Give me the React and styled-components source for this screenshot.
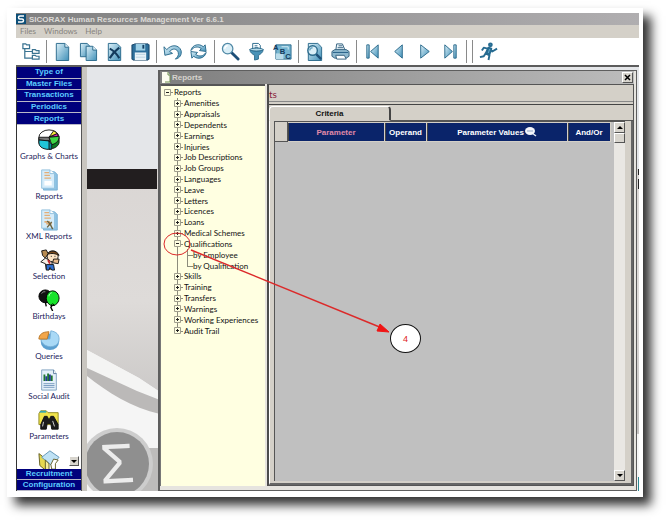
import React, { useState } from "react";
import styled, { createGlobalStyle, css } from "styled-components";

const menus = ["Files", "Windows", "Help"];

const topGroups = ["Type of", "Master Files", "Transactions", "Periodics", "Reports"];
const bottomGroups = ["Recruitment", "Configuration"];

const tree = [
  { name: "Reports", depth: 0, open: true },
  { name: "Amenities", depth: 1 },
  { name: "Appraisals", depth: 1 },
  { name: "Dependents", depth: 1 },
  { name: "Earnings", depth: 1 },
  { name: "Injuries", depth: 1 },
  { name: "Job Descriptions", depth: 1 },
  { name: "Job Groups", depth: 1 },
  { name: "Languages", depth: 1 },
  { name: "Leave", depth: 1 },
  { name: "Letters", depth: 1 },
  { name: "Licences", depth: 1 },
  { name: "Loans", depth: 1 },
  { name: "Medical Schemes", depth: 1 },
  { name: "Qualifications", depth: 1, open: true },
  { name: "by Employee", depth: 2 },
  { name: "by Qualification", depth: 2, last: true },
  { name: "Skills", depth: 1 },
  { name: "Training", depth: 1 },
  { name: "Transfers", depth: 1 },
  { name: "Warnings", depth: 1 },
  { name: "Working Experiences", depth: 1 },
  { name: "Audit Trail", depth: 1, last: true },
];

/* toolbar drawings, all on a 20x20 grid */
const toolIcons = {
  Tree: (
    <g fill="#fff" stroke="#3a7391" strokeWidth="1.3">
      <path d="M4 6v11h8M4 10h8" fill="none" />
      <path d="M2 2h3l1 1h3v4H2zM12 8h3l1 1h3v3h-7zM12 14h3l1 1h3v3h-7z" />
    </g>
  ),
  New: (
    <g stroke="#2b6a8c">
      <path d="M3.500 1.500h9l4 4v14h-13z" fill="url(#paper)" />
      <path d="M12.500 1.500v4h4" fill="#e8f4fa" />
    </g>
  ),
  Copy: (
    <g stroke="#2b6a8c">
      <path d="M1.500 1.500h7l3 3v11h-10z" fill="url(#paper)" />
      <path d="M7.500 4.500h7l4 4v11h-11z" fill="url(#paper)" />
      <path d="M14.500 4.500v4h4" fill="#e8f4fa" />
    </g>
  ),
  Delete: (
    <g stroke="#2b6a8c">
      <path d="M3.500 1.500h9l4 4v14h-13z" fill="url(#paper)" />
      <path d="M5 7c4 2 7 5 10 10M15 6c-4 3-7 6-10 11" fill="none" stroke="#123a5c" strokeWidth="2.200" />
    </g>
  ),
  Save: (
    <g>
      <path d="M2 3l2-1h14l1 1v15l-1 1H2l-1-1V3z" fill="#2d6f9b" stroke="#123f63" />
      <path d="M5 2h10v7H5z" fill="#9fd0e6" />
      <path d="M4 11h12v8H4z" fill="#e9f3f8" />
      <path d="M12 3h2v4h-2z" fill="#123f63" />
      <path d="M5 13h10M5 16h10" stroke="#b9d3e0" />
    </g>
  ),
  Undo: (
    <path
      d="M1 5l1 9 8-2-3-2c3-4 8-3 9 1 1 3-1 5-3 7 5-1 7-5 6-9C17 3 9 2 4 8z"
      fill="url(#paper)"
      stroke="#2b6a8c"
    />
  ),
  Refresh: (
    <g fill="url(#paper)" stroke="#2b6a8c">
      <path d="M2 9C3 3 11 1 15 5l2-2 1 7-7-1 2-2C9 4 5 5 2 9z" />
      <path d="M18 11c-1 6-9 8-13 4l-2 2-1-7 7 1-2 2c4 3 8 2 11-2z" />
    </g>
  ),
  Find: (
    <g>
      <path d="M11 11l7 7" stroke="#1d4f78" strokeWidth="3" strokeLinecap="round" />
      <circle cx="7" cy="7" r="5.500" fill="#d9eef7" stroke="#5089a6" strokeWidth="1.300" />
      <path d="M4 7c0-2 1-3 3-3" fill="none" stroke="#fff" strokeWidth="1.500" />
    </g>
  ),
  Filter: (
    <g stroke="#2b6a8c">
      <path d="M6 1.500h6l2 2V8H6z" fill="#fff" />
      <path d="M8 4h3M8 6h4" />
      <path d="M3 8c3 2 11 2 14 0 0 3-3 5-5 6v4l-4 1v-5c-2-1-5-3-5-6z" fill="#4a93b8" />
      <ellipse cx="10" cy="8" rx="7" ry="1.500" fill="#b8dcea" />
    </g>
  ),
  Sort: (
    <g>
      <path d="M3 3h16v15H3z" fill="#75b4d0" stroke="#2b6a8c" />
      <path d="M3 12h8v6H3z" fill="#b9dcea" />
      <path d="M9 5h7v3" fill="none" stroke="#d7eef7" />
      <text x="0" y="8" fontSize="8">A</text>
      <text x="7" y="13" fontSize="8">B</text>
      <text x="13" y="18" fontSize="8">C</text>
    </g>
  ),
  Preview: (
    <g>
      <path d="M3.500 1.500h10l4 4v14h-14z" fill="url(#paper)" stroke="#2b6a8c" />
      <path d="M11 12l6 6" stroke="#1d4f78" strokeWidth="2.500" />
      <circle cx="8" cy="9" r="5" fill="#d9eef7" stroke="#2b6a8c" strokeWidth="1.500" />
      <path d="M5 9c0-2 1-3 3-3" fill="none" stroke="#6ea9c5" strokeWidth="1.500" />
    </g>
  ),
  Print: (
    <g stroke="#35627f">
      <path d="M5 9l1-7h6l3 7z" fill="#eef7fb" />
      <path d="M8 4h4M7 6h6" />
      <path d="M1 10l3-2h12l3 2v5l-3 2H4l-3-2z" fill="#8fb9cf" />
      <path d="M5 14h9l2 4H6z" fill="#fff" />
      <path d="M2 11h16" stroke="#225d84" />
    </g>
  ),
  First: (
    <g fill="url(#paper)" stroke="#2b6a8c">
      <path d="M4 3h2.500v14H4z" />
      <path d="M16 3v14L8 10z" />
    </g>
  ),
  Previous: <path d="M14 3v14L6 10z" fill="url(#paper)" stroke="#2b6a8c" />,
  Next: <path d="M6 3v14l9-7z" fill="url(#paper)" stroke="#2b6a8c" />,
  Last: (
    <g fill="url(#paper)" stroke="#2b6a8c">
      <path d="M13.500 3H16v14h-2.500z" />
      <path d="M4 3v14l8-7z" />
    </g>
  ),
  Exit: (
    <g fill="none" stroke="#266b91" strokeWidth="2" strokeLinejoin="round">
      <path d="M10 6l-3 6 4 2-1 5M7 12l-2 3-4 1M9 7L5 6 3 9M11 7l3 3 5-3" />
      <path d="M10 6l-2 6 3 1 2-6z" fill="#5fa6c8" />
      <circle cx="12" cy="3" r="1.500" fill="#5fa6c8" />
    </g>
  ),
};

const toolbar = [
  "Tree", "|", "New", "Copy", "Delete", "Save", "|", "Undo", "Refresh", "|",
  "Find", "Filter", "Sort", "|", "Preview", "Print", "|",
  "First", "Previous", "Next", "Last", "|", "|", "Exit",
];

/* sidebar drawings, all on a 24x24 grid */
const page = (
  <g>
    <path d="M6 3h12l3 3v17H6z" fill="#8fc4e4" stroke="#76aed2" />
    <path d="M4 1h9l5 4v16H4z" fill="#d5ecfa" stroke="#8fbfdd" />
    <path d="M13 1v4h5" fill="#fff" stroke="#8fbfdd" />
    <path d="M7 4h5M7 7h6M7 10h7" stroke="#e2ad76" strokeWidth="1.500" />
  </g>
);

const shortcuts = [
  {
    name: "Graphs & Charts",
    icon: (
      <g stroke="#111">
        <path d="M1 10v5c2 9 20 9 22 0v-5z" fill="#0b7a21" />
        <ellipse cx="12" cy="9" rx="11" ry="8" fill="#fff" />
        <path d="M12 9l5-7c2 1 3 2 4 3z" fill="#f3e83a" />
        <path d="M12 9l9-4 1 3z" fill="#e02ac0" />
        <path d="M12 9l11-1c0 5-3 8-8 9z" fill="#3bd545" />
        <path d="M1 9h11l1 4-12-1z" fill="#777" />
        <path d="M1 12l11 1 2 4v5c-7 1-13-2-13-7z" fill="#20c5d8" />
        <path d="M12 13l3 4v5h-3z" fill="#0a8a9c" />
      </g>
    ),
  },
  { name: "Reports", icon: <g>{page}<path d="M7 13h8v5H7z" fill="#fff" /></g> },
  {
    name: "XML Reports",
    icon: (
      <g>
        {page}
        <path d="M7 14h3M12 13v5M9 16h6" stroke="#e2ad76" strokeWidth="2" />
        <path d="M10 13l3 3 3 6M15 14l-5 6" stroke="#6b6340" strokeWidth="1.500" fill="none" />
      </g>
    ),
  },
  {
    name: "Selection",
    icon: (
      <g stroke="#111">
        <path d="M3 14l5-4 7 3 1 9H9l-1-6z" fill="#f7f0e7" />
        <path d="M9 17h8l1 6h-3l-2-3-1 3H9z" fill="#2d6fd0" />
        <ellipse cx="16" cy="8" rx="6" ry="6" fill="#fbe3c4" />
        <path d="M10 6c2-5 11-5 13 1-4-2-8-3-13-1z" fill="#7a4a1c" />
        <path d="M4 2l5-1 2 4-3 5-3-3z" fill="#b78b52" />
        <path d="M17 11h6l-1 5-6-1z" fill="#e9b98b" />
        <path d="M11 12l2 4" stroke="#c2242b" strokeWidth="2" />
        <path d="M14 8h1M18 8h1" />
      </g>
    ),
  },
  {
    name: "Birthdays",
    icon: (
      <g stroke="#000">
        <path d="M8 14l1 5M16 17l-2 3 2 4" fill="none" strokeWidth="1.500" />
        <ellipse cx="8" cy="8" rx="7" ry="7" fill="#111" />
        <path d="M4 5c1-2 2-2 4-2" stroke="#999" fill="none" />
        <ellipse cx="16" cy="10" rx="7" ry="8" fill="#18e32b" />
        <path d="M12 8c0-2 1-3 3-4" stroke="#c9ffd0" fill="none" />
        <path d="M14 18h4l-2-2z" fill="#18e32b" />
      </g>
    ),
  },
  {
    name: "Queries",
    icon: (
      <g>
        <ellipse cx="13" cy="14" rx="10" ry="9" fill="#5b9fd0" />
        <path d="M3 11c2 11 20 11 20 0 0-5-3-8-9-9l-1 9z" fill="#a9d9f6" stroke="#77b0d8" />
        <path d="M1 11c0-5 4-8 11-8l-2 8z" fill="#f2a64a" stroke="#b87526" />
      </g>
    ),
  },
  {
    name: "Social Audit",
    icon: (
      <g>
        <path d="M4 1h13l3 4v18H4z" fill="#e4f0f9" stroke="#7c9fbe" />
        <path d="M17 1v4h3" fill="#fff" stroke="#57789a" />
        <path d="M7 6v7M11 5v8M15 7v6" stroke="#1d7730" strokeWidth="2" />
        <path d="M9 8v5M13 6v7" stroke="#243b92" strokeWidth="2" />
        <path d="M6 16h12M6 18h12M6 20h12" stroke="#7397bd" />
      </g>
    ),
  },
  {
    name: "Parameters",
    icon: (
      <g stroke="#111">
        <path d="M1 5l2-3h6l2 2h11v13H1z" fill="#f0e34a" stroke="#8d861e" />
        <path d="M2 3h7" stroke="#37a6b0" strokeWidth="2" />
        <path d="M7 8h3l2 4 2-4h3l5 9v5h-7l-1-6h-4l-1 6H3v-5z" fill="#1b1b1b" />
        <path d="M6 14l-1 5M16 13l2 6" stroke="#ddd" />
      </g>
    ),
  },
  {
    icon: (
      <g stroke="#5e5a20">
        <path d="M1 5l9 7-2 11-6-5z" fill="#e6d94f" />
        <path d="M4 9l9-7 10 7-8 9z" fill="#bfe2f5" stroke="#5d93b3" />
        <path d="M8 12l4 4v7l-4-1z" fill="#f6ef9b" />
        <path d="M14 17l3-6 5 1-3 4v6h-4z" fill="#fff" />
      </g>
    ),
  },
];

const columns = [
  { name: "Parameter", width: "97px", active: true },
  { name: "Operand", width: "42px" },
  { name: "Parameter Values", lookup: true },
  { name: "And/Or", width: "43px" },
];

const Wallpaper = () => (
  <Backdrop viewBox="0 0 553 424" preserveAspectRatio="xMinYMin slice" aria-hidden="true">
    <defs>
      <linearGradient id="wall" x1="0" y1="0" x2="0" y2="1">
        <stop offset="0" stopColor="#dad6d4" />
        <stop offset="0.500" stopColor="#dedbd9" />
        <stop offset="1" stopColor="#c4c2c1" />
      </linearGradient>
    </defs>
    <path d="M0 0h553v102H0z" fill="#e4e6e9" />
    <path d="M0 102h553v322H0z" fill="#f5f5f5" />
    <path d="M0 102h553v265L73 325 52 311 0 283z" fill="url(#wall)" />
    <path d="M0 283l52 28 21 14v8l-23-9L0 301z" fill="#f4f4f3" />
    <path d="M0 301l50 23 23 9v14C45 341 20 325 0 309z" fill="#bbb9b8" />
    <path d="M0 102h70v20H0z" fill="#221e1f" />
    <path d="M45 381h28v43H45z" fill="#bdbcbb" />
    <circle cx="30" cy="397" r="36" fill="#cdcdcd" />
    <circle cx="30" cy="397" r="32" fill="#8f8f8f" />
    <text x="13" y="416" transform="rotate(-3 30 400)" fontSize="56" fill="#ececec">
      Σ
    </text>
    <path d="M551 102h2v6h-2zM551 112h2v10h-2z" fill="#222" />
    <path d="M551 410h2v14h-2z" fill="#2c8a94" />
  </Backdrop>
);

const ToolIcon = ({ name }) => (
  <svg width="19" height="19" viewBox="0 0 20 20" fontWeight="700" fill="#123a5c">
    <defs>
      <linearGradient id="paper" x1="0" y1="0" x2="1" y2="1">
        <stop offset="0" stopColor="#dcf0f8" />
        <stop offset="1" stopColor="#4090b8" />
      </linearGradient>
    </defs>
    {toolIcons[name]}
  </svg>
);

const Annotation = () => (
  <>
    <Marks viewBox="0 0 260 120" width="260" height="120" aria-hidden="true">
      <g fill="none" stroke="#dc2a2a">
        <ellipse cx="17" cy="17" rx="13" ry="11" />
        <path d="M31 23l191 78" strokeWidth="1.500" />
      </g>
      <path d="M220 97l9 8-12-1z" fill="#f01414" stroke="#f01414" />
    </Marks>
    <Bubble>4</Bubble>
  </>
);

const App = () => {
  const [selected, setSelected] = useState("Reports");

  return (
    <Screen>
      <GlobalStyle />
      <Frame>
        <TitleBar>
          <Logo viewBox="0 0 10 10">
            <path d="M0 0h10v10H0z" fill="#0d4f78" />
            <path d="M8 2H4C2 2 2 5 4 5h2c2 0 2 3 0 3H2" fill="none" stroke="#fff" strokeWidth="1.500" />
          </Logo>
          <h1>SICORAX Human Resources Management Ver 6.6.1</h1>
        </TitleBar>
        <MenuBar>
          {menus.map((menu) => (
            <MenuButton key={menu}>{menu}</MenuButton>
          ))}
        </MenuBar>
        <Toolbar>
          {toolbar.map((name, i) =>
            name === "|" ? (
              <Separator key={i} />
            ) : (
              <ToolButton key={i} aria-label={name}>
                <ToolIcon name={name} />
              </ToolButton>
            )
          )}
        </Toolbar>
        <Workspace>
          <Sidebar>
            <Groups $height="58px">
              {topGroups.map((group) => (
                <GroupButton key={group}>{group}</GroupButton>
              ))}
            </Groups>
            <Shortcuts>
              {shortcuts.map((item, i) => (
                <Shortcut key={i}>
                  <svg width="22" height="22" viewBox="0 0 24 24">
                    {item.icon}
                  </svg>
                  {item.name && <span>{item.name}</span>}
                </Shortcut>
              ))}
              <MoreButton aria-label="Scroll down">
                <Arrow />
              </MoreButton>
            </Shortcuts>
            <Groups $height="22px">
              {bottomGroups.map((group) => (
                <GroupButton key={group}>{group}</GroupButton>
              ))}
            </Groups>
          </Sidebar>
          <Desktop>
            <Wallpaper />
            <Window>
              <WindowTitle>
                <svg width="10" height="11" viewBox="0 0 10 11">
                  <path d="M1 0h6l2 3v8H1z" fill="#fdfdf0" />
                  <path d="M7 0v3h2v7H4" fill="none" stroke="#6f8f52" />
                </svg>
                <h2>Reports</h2>
                <CloseButton aria-label="Close">
                  <svg width="7" height="7" viewBox="0 0 7 7">
                    <path d="M1 1l5 5M6 1L1 6" stroke="#000" strokeWidth="1.500" />
                  </svg>
                </CloseButton>
              </WindowTitle>
              <WindowBody>
                <TreePane>
                  <TreeList>
                    {tree.map((node) => (
                      <TreeRow key={node.name} $depth={node.depth} $last={node.last}>
                        {node.depth < 2 && (
                          <Expander width="7" height="7" viewBox="0 0 7 7">
                            <path d="M.5.5h6v6h-6z" fill="#ffffe1" stroke="#a09f8e" />
                            <path d={node.open ? "M2 3.500h3" : "M2 3.500h3M3.500 2v3"} stroke="#222" />
                          </Expander>
                        )}
                        <NodeButton onClick={() => setSelected(node.name)} aria-pressed={selected === node.name}>
                          {node.name}
                        </NodeButton>
                      </TreeRow>
                    ))}
                  </TreeList>
                </TreePane>
                <Content>
                  <Heading>ts</Heading>
                  <TabRow>
                    <Tab>Criteria</Tab>
                  </TabRow>
                  <TabPage>
                    <Grid>
                      <GridArea>
                        <Table>
                          <thead>
                            <tr>
                              <RowHead />
                              {columns.map((col) => (
                                <HeadCell key={col.name} $width={col.width} $active={col.active}>
                                  {col.name}
                                  {col.lookup && (
                                    <Lookup width="12" height="10" viewBox="0 0 12 10">
                                      <path d="M7 6l4 3" stroke="#dfe6f2" strokeWidth="1.500" />
                                      <ellipse cx="5" cy="4" rx="5" ry="4" fill="#f2f5fa" />
                                      <path d="M2 4h6" stroke="#8fa3c4" />
                                    </Lookup>
                                  )}
                                </HeadCell>
                              ))}
                            </tr>
                          </thead>
                        </Table>
                      </GridArea>
                      <ScrollBar>
                        <ScrollButton aria-label="Scroll up">
                          <Arrow $up />
                        </ScrollButton>
                        <Thumb />
                        <ScrollButton aria-label="Scroll down">
                          <Arrow />
                        </ScrollButton>
                      </ScrollBar>
                    </Grid>
                  </TabPage>
                </Content>
              </WindowBody>
              <Annotation />
            </Window>
          </Desktop>
        </Workspace>
      </Frame>
    </Screen>
  );
};

export default App;

const GlobalStyle = createGlobalStyle`
  * {
    box-sizing: border-box;
  }

  body {
    margin: 0;
    background: #fff;
    color: #111;
    font-family: Lato, "Liberation Sans", Arial, sans-serif;
    font-size: 8px;
    line-height: 11px;
  }

  button {
    margin: 0;
    padding: 0;
    border: 0;
    background: none;
    color: inherit;
    font: inherit;
  }

  h1, h2, ul {
    margin: 0;
    padding: 0;
  }

  svg {
    display: block;
    flex: none;
    font-family: "Liberation Sans", Arial, sans-serif;
  }
`;

const boldText = css`
  font-family: "Liberation Sans", Arial, sans-serif;
  font-size: 8px;
  font-weight: 700;
`;

const raised = css`
  background: #d8d5ce;
  border: 1px solid;
  border-color: #fff #555 #555 #fff;
`;

const Screen = styled.div`
  display: flex;
  height: 100vh;
  padding: 8px 23px 23px 7px;
`;

const Frame = styled.main`
  display: flex;
  flex: 1;
  min-width: 0;
  flex-direction: column;
  padding: 5px 4px 6px 9px;
  background: #fff;
  box-shadow: 8px 8px 10px #333;
`;

const TitleBar = styled.header`
  display: flex;
  align-items: center;
  gap: 3px;
  height: 12px;
  background: linear-gradient(90deg, #808080, #b0aeb0);

  h1 {
    ${boldText}
    color: #dcdad6;
  }
`;

const Logo = styled.svg`
  width: 10px;
  height: 10px;
`;

const MenuBar = styled.nav`
  display: flex;
  align-items: center;
  gap: 8px;
  height: 13px;
  padding-left: 4px;
  background: #d4d0c8;
`;

const MenuButton = styled.button`
  color: #86837d;
`;

const Toolbar = styled.div`
  display: flex;
  align-items: center;
  height: 29px;
  padding-left: 1px;
  border-bottom: 2px solid #5c5c5c;
`;

const ToolButton = styled.button`
  display: flex;
  justify-content: center;
  width: 26px;
`;

const Separator = styled.i`
  width: 1px;
  height: 23px;
  margin: 0 2px 0 3px;
  background: #8a8a8a;
`;

const Workspace = styled.div`
  display: flex;
  flex: 1;
  min-height: 0;
`;

const Sidebar = styled.aside`
  display: flex;
  flex: none;
  flex-direction: column;
  width: 66px;
  border-left: 1px solid #333;
  border-right: 1px solid #555;
`;

const Groups = styled.div`
  display: grid;
  grid-auto-rows: 1fr;
  flex: none;
  height: ${({ $height }) => $height};
`;

const GroupButton = styled.button`
  ${boldText}
  min-height: 0;
  border-bottom: 1px solid #b9b9c8;
  background: #00007c;
  color: #5ccbff;
  line-height: 10px;
`;

const Shortcuts = styled.div`
  position: relative;
  flex: 1;
  min-height: 0;
  padding-top: 4px;
  overflow: hidden;
`;

const Shortcut = styled.button`
  display: flex;
  flex-direction: column;
  align-items: center;
  width: 100%;
  height: 40px;
  color: #1c1c5c;
  white-space: nowrap;
`;

const MoreButton = styled.button`
  ${raised}
  position: absolute;
  right: 2px;
  bottom: 3px;
  display: flex;
  align-items: center;
  justify-content: center;
  width: 10px;
  height: 10px;
`;

const Arrow = styled.i`
  width: 0;
  border: 3px solid transparent;
  border-top: ${({ $up }) => ($up ? "0" : "3px solid #000")};
  border-bottom: ${({ $up }) => ($up ? "3px solid #000" : "0")};
`;

const Desktop = styled.section`
  position: relative;
  display: flex;
  flex: 1;
  min-width: 0;
  padding: 3px 2px 0 71px;
  border-left: 5px solid #c9c6c0;
  box-shadow: inset 1px 0 0 #555;
`;

const Backdrop = styled.svg`
  position: absolute;
  inset: 0;
  width: 100%;
  height: 100%;
`;

const Window = styled.div`
  position: relative;
  display: flex;
  flex: 1;
  min-width: 0;
  flex-direction: column;
  padding-right: 2px;
  border: solid #5e5e5e;
  border-width: 1px 1px 1px 2px;
  background: #e6e4df;
`;

const WindowTitle = styled.div`
  display: flex;
  flex: none;
  align-items: center;
  gap: 1px;
  height: 13px;
  padding: 0 1px;
  background: linear-gradient(90deg, #7e7e7e, #bcbcbc);

  h2 {
    ${boldText}
    flex: 1;
    color: #d6d3cd;
  }
`;

const CloseButton = styled.button`
  ${raised}
  display: flex;
  align-items: center;
  justify-content: center;
  width: 11px;
  height: 11px;
`;

const WindowBody = styled.div`
  display: flex;
  flex: 1;
  min-height: 0;
  padding-bottom: 4px;
`;

const TreePane = styled.div`
  flex: none;
  width: 105px;
  padding-top: 1px;
  border-top: 2px solid #555;
  border-left: 1px solid #777;
  background: #ffffe1;
`;

const TreeList = styled.ul`
  display: grid;
  grid-auto-rows: 1fr;
  height: 249px;
  list-style: none;
`;

const TreeRow = styled.li`
  position: relative;
  display: flex;
  align-items: center;
  min-height: 0;
  padding-left: ${({ $depth }) => [3, 13, 26][$depth]}px;
  line-height: 10px;

  ${({ $depth, $last }) =>
    $depth === 2 &&
    !$last &&
    css`
      background: linear-gradient(#8c8c7c, #8c8c7c) 26px 0 / 1px 100% no-repeat;
    `}

  /* branch line on the left and the short arm to the label */
  &::before {
    content: "";
    position: absolute;
    top: 0;
    left: 16px;
    height: ${({ $depth, $last }) => ($depth === 1 && $last ? "50%" : "100%")};
    border-left: ${({ $depth }) => ($depth ? "1px solid #8c8c7c" : "0")};
  }

  &::after {
    content: "";
    position: absolute;
    top: ${({ $depth }) => ($depth === 2 ? "0" : "50%")};
    left: ${({ $depth }) => [10, 20, 26][$depth]}px;
    width: ${({ $depth }) => ($depth === 2 ? 5 : 2)}px;
    height: 50%;
    border: solid #8c8c7c;
    border-width: ${({ $depth }) => ($depth === 2 ? "0 0 1px 1px" : "1px 0 0 0")};
  }
`;

const Expander = styled.svg`
  position: relative;
`;

const NodeButton = styled.button`
  flex: 1;
  padding-left: 3px;
  text-align: left;
  white-space: nowrap;

  &:first-child {
    padding-left: 6px;
  }
`;

const Content = styled.div`
  display: flex;
  flex: 1;
  min-width: 0;
  flex-direction: column;
  margin-left: 2px;
  border-left: 2px solid #4c4c4c;
  border-right: 1px solid #555;
  border-bottom: 1px solid #555;
  background: #d4d0c8;
`;

const Heading = styled.div`
  height: 18px;
  border-top: 1px solid #555;
  border-bottom: 1px solid #888;
  color: #8a1c3c;
  font-size: 10px;
  line-height: 18px;
`;

const TabRow = styled.div`
  display: flex;
  height: 17px;
  margin-top: 2px;
  border-top: 1px solid #444;
  box-shadow: inset 0 -1px 0 #555;
`;

const Tab = styled.button`
  ${boldText}
  width: 122px;
  margin-top: 1px;
  border: 1px solid;
  border-color: #fff #444 #d4d0c8 #fff;
  border-right-width: 2px;
  border-radius: 4px 4px 0 0;
  background: #d4d0c8;
`;

const TabPage = styled.div`
  display: flex;
  flex: 1;
  min-height: 0;
  padding: 0 6px 2px 4px;
  border-left: 1px solid #fff;
  border-right: 2px solid #666;
  border-bottom: 2px solid #666;
`;

const Grid = styled.div`
  display: flex;
  flex: 1;
  min-width: 0;
  border: solid #555;
  border-width: 1px 0 0 1px;
  background: #c0c0c0;
`;

const GridArea = styled.div`
  flex: 1;
  min-width: 0;
  padding-right: 3px;
`;

const Table = styled.table`
  width: 100%;
  border-spacing: 0;
  table-layout: fixed;
`;

const HeadCell = styled.th`
  ${boldText}
  width: ${({ $width }) => $width || "auto"};
  height: 20px;
  padding: 0;
  border: solid #d4d0c8;
  border-width: 1px 1px 1px 0;
  background: #0a246a;
  box-shadow: inset 1px 0 0 #444;
  color: ${({ $active }) => ($active ? "#e08aa8" : "#fff")};
  white-space: nowrap;
`;

const RowHead = styled.td`
  width: 13px;
  padding: 0;
  border-right: 1px solid #555;
  border-bottom: 1px solid #555;
  background: #d4d0c8;
`;

const Lookup = styled.svg`
  display: inline-block;
  margin-left: 1px;
  vertical-align: middle;
`;

const ScrollBar = styled.div`
  display: flex;
  flex-direction: column;
  width: 11px;
  background: #e9e7e3;
`;

const ScrollButton = styled.button`
  ${raised}
  display: flex;
  align-items: center;
  justify-content: center;
  width: 11px;
  height: 11px;
`;

const Thumb = styled.div`
  ${raised}
  height: 10px;
  margin-bottom: auto;
`;

/* call-out drawn over the window */
const Marks = styled.svg`
  position: absolute;
  top: 156px;
  left: 0;
  pointer-events: none;
`;

const Bubble = styled.div`
  position: absolute;
  top: 253px;
  left: 230px;
  width: 31px;
  height: 29px;
  border: 1px solid #111;
  border-radius: 50%;
  background: #fff;
  color: #e02222;
  font-family: "Liberation Sans", Arial, sans-serif;
  font-size: 9px;
  line-height: 28px;
  text-align: center;
`;
